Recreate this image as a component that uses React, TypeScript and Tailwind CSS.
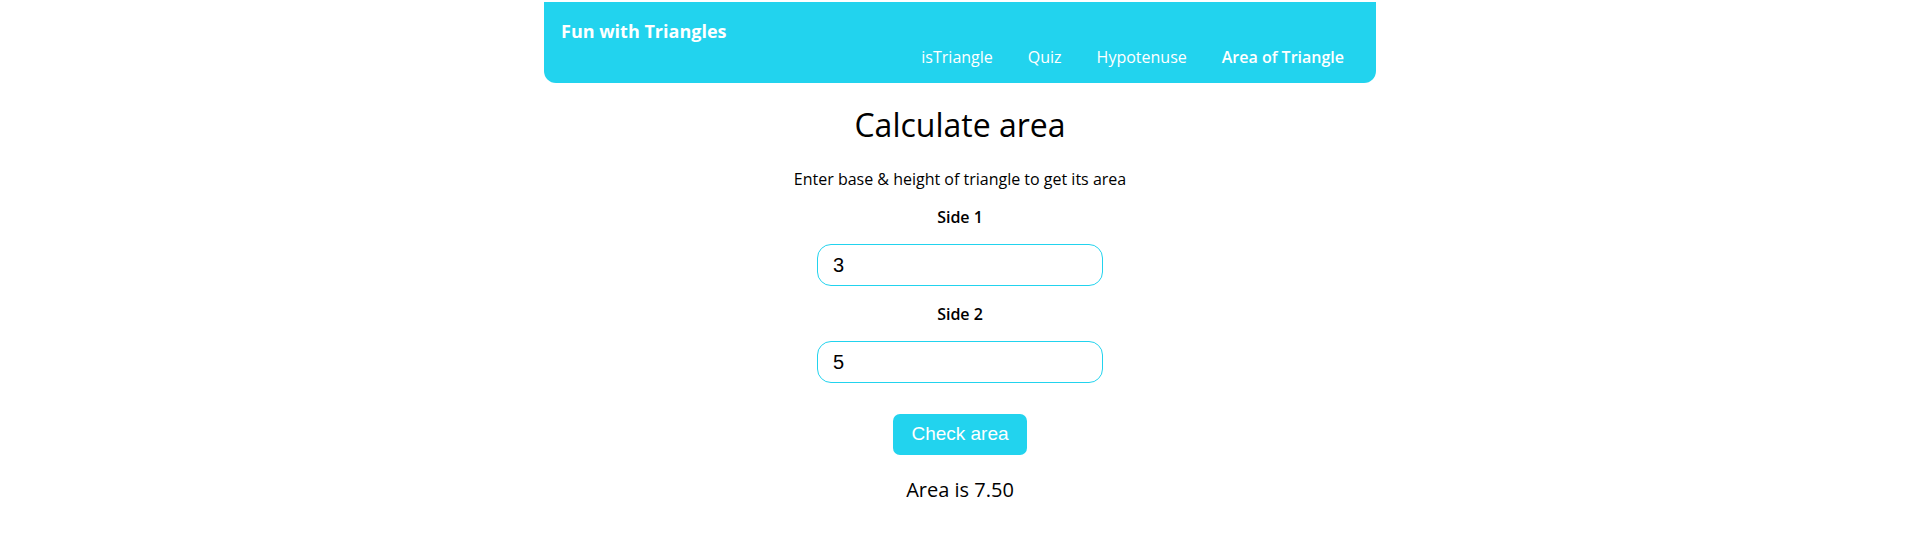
import { useState } from "react";

const links = ["isTriangle", "Quiz", "Hypotenuse", "Area of Triangle"];

const App = () => {
  const [side1, setSide1] = useState("3");
  const [side2, setSide2] = useState("5");
  const [area, setArea] = useState("7.50");

  const calc = () => {
    setArea(((Number(side1) * Number(side2)) / 2).toFixed(2));
  };

  return (
    <div className="min-h-screen bg-white font-['Open_Sans',sans-serif] text-black">
      <nav className="mx-auto mt-[2px] flex h-[81px] w-[832px] justify-between rounded-b-xl bg-[#22d3ee] pl-[17px] pr-[32px] pt-[15px] pb-[14px] text-white">
        <div className="self-start text-[18px] leading-[28px] font-bold">Fun with Triangles</div>
        <ul className="flex gap-[35px] self-end text-[16px] leading-[24px]">
          {links.map((l) => (
            <li key={l} className={l === "Area of Triangle" ? "font-semibold" : ""}>
              {l}
            </li>
          ))}
        </ul>
      </nav>

      <main className="flex flex-col items-center">
        <h1 className="mt-[22px] text-[32px] leading-[40px] font-medium">Calculate area</h1>
        <p className="mt-[22px] text-[16px] leading-[24px]">Enter base &amp; height of triangle to get its area</p>

        <label className="mt-[14px] text-[16px] leading-[24px] font-semibold">Side 1</label>
        <input
          value={side1}
          onChange={(e) => setSide1(e.target.value)}
          className="mt-[15px] h-[42px] w-[286px] rounded-[14px] border border-[#22d3ee] px-[15px] font-['Liberation_Sans',Arial,sans-serif] text-[20px] outline-none"
        />

        <label className="mt-[16px] text-[16px] leading-[24px] font-semibold">Side 2</label>
        <input
          value={side2}
          onChange={(e) => setSide2(e.target.value)}
          className="mt-[15px] h-[42px] w-[286px] rounded-[14px] border border-[#22d3ee] px-[15px] font-['Liberation_Sans',Arial,sans-serif] text-[20px] outline-none"
        />

        <button
          onClick={calc}
          className="mt-[31px] h-[41px] w-[134px] rounded-[7px] bg-[#22d3ee] font-['Liberation_Sans',Arial,sans-serif] text-[19px] text-white"
        >
          Check area
        </button>

        <div className="mt-[21px] text-[20px] leading-[28px] font-medium">Area is {area}</div>
      </main>
    </div>
  );
};

export default App;
